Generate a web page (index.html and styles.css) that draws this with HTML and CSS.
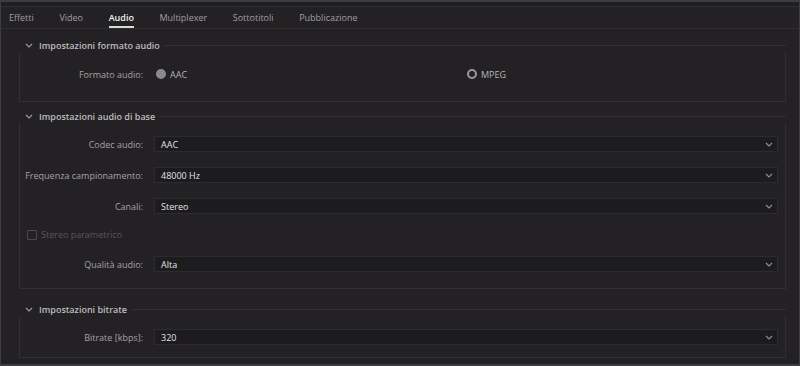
FILE: index.html
```html
<!DOCTYPE html>
<html lang="it">

<head>
    <meta charset="UTF-8">
    <meta name="viewport" content="width=device-width, initial-scale=1.0">
    <title>Impostazioni audio</title>
    <link rel="stylesheet" href="styles.css">
</head>

<body>
    <div class="app">
        <div class="topbar"></div>
        <div class="tabs">
            <span class="tab">Effetti</span>
            <span class="tab">Video</span>
            <span class="tab active">Audio</span>
            <span class="tab">Multiplexer</span>
            <span class="tab">Sottotitoli</span>
            <span class="tab">Pubblicazione</span>
        </div>

        <div class="content">
            <!-- formato -->
            <div class="section first">
                <div class="section-head">
                    <svg class="twisty" width="8" height="5" viewBox="0 0 8 5"><path d="M1 1l3 3 3-3" /></svg>
                    <span class="section-title">Impostazioni formato audio</span>
                    <span class="rule"></span>
                </div>
                <div class="section-body format">
                    <div class="row">
                        <label class="label">Formato audio:</label>
                        <div class="options">
                            <div class="option"><span class="radio checked"></span>AAC</div>
                            <div class="option"><span class="radio"></span>MPEG</div>
                        </div>
                    </div>
                </div>
            </div>

            <!-- base -->
            <div class="section second">
                <div class="section-head">
                    <svg class="twisty" width="8" height="5" viewBox="0 0 8 5"><path d="M1 1l3 3 3-3" /></svg>
                    <span class="section-title">Impostazioni audio di base</span>
                    <span class="rule"></span>
                </div>
                <div class="section-body basic">
                    <div class="row">
                        <label class="label">Codec audio:</label>
                        <div class="select">AAC<svg class="caret" width="8" height="5" viewBox="0 0 8 5"><path d="M1 1l3 3 3-3" /></svg></div>
                    </div>
                    <div class="row">
                        <label class="label">Frequenza campionamento:</label>
                        <div class="select">48000 Hz<svg class="caret" width="8" height="5" viewBox="0 0 8 5"><path d="M1 1l3 3 3-3" /></svg></div>
                    </div>
                    <div class="row">
                        <label class="label">Canali:</label>
                        <div class="select">Stereo<svg class="caret" width="8" height="5" viewBox="0 0 8 5"><path d="M1 1l3 3 3-3" /></svg></div>
                    </div>
                    <div class="check-row">
                        <span class="checkbox"></span>Stereo parametrico
                    </div>
                    <div class="row">
                        <label class="label">Qualità audio:</label>
                        <div class="select">Alta<svg class="caret" width="8" height="5" viewBox="0 0 8 5"><path d="M1 1l3 3 3-3" /></svg></div>
                    </div>
                </div>
            </div>

            <!-- bitrate -->
            <div class="section third">
                <div class="section-head">
                    <svg class="twisty" width="8" height="5" viewBox="0 0 8 5"><path d="M1 1l3 3 3-3" /></svg>
                    <span class="section-title">Impostazioni bitrate</span>
                    <span class="rule"></span>
                </div>
                <div class="section-body bitrate">
                    <div class="row">
                        <label class="label">Bitrate [kbps]:</label>
                        <div class="select">320<svg class="caret" width="8" height="5" viewBox="0 0 8 5"><path d="M1 1l3 3 3-3" /></svg></div>
                    </div>
                </div>
            </div>
        </div>
    </div>
</body>

</html>
```

FILE: styles.css
```css
body {
    margin: 0;
    padding: 0;
    background-color: #232124;
    font-family: 'Open Sans', 'Noto Sans', sans-serif;
    font-size: 9px;
    color: #a3a2a5;
}

.app {
    width: 800px;
    height: 366px;
    box-sizing: border-box;
    border: 1px solid #3d3c3f;
    border-top-width: 2px;
    border-bottom-width: 2px;
    overflow: hidden;
    background: #232124;
}

.topbar {
    height: 4px;
    background: #1f1e21;
    border-bottom: 1px solid #2f2e31;
}

/* tabs */
.tabs {
    display: flex;
    gap: 25.6px;
    height: 21px;
    padding-left: 8px;
    border-bottom: 1px solid #2f2e31;
}

.tab {
    display: flex;
    align-items: center;
    padding-top: 2px;
    box-sizing: border-box;
    color: #a09fa2;
    border-bottom: 2px solid transparent;
}

.tab.active {
    color: #f0f0f0;
    font-weight: 600;
    border-bottom-color: #d8d8d8;
}

.content {
    padding-top: 9px;
}

/* sections */
.section {
    margin: 0 13px 0 18px;
}

.section.second {
    margin-top: 7px;
}

.section.third {
    margin-top: 13px;
}

.section-head {
    display: flex;
    align-items: center;
    height: 14px;
}

.twisty {
    margin-left: 6px;
    fill: none;
    stroke: #9a999c;
    stroke-width: 1.2;
}

.section-title {
    margin: 0 4px 0 6px;
    font-weight: 600;
    color: #bdbcbf;
}

.rule {
    flex: 1;
    height: 1px;
    background: #302f32;
}

.section-body {
    border: 1px solid #302f32;
    border-top: none;
}

.section-body.format {
    padding: 14px 0 19px;
}

.section-body.basic {
    padding: 13px 0 16px;
}

.section-body.bitrate {
    padding: 13px 0 12px;
}

/* rows */
.row {
    display: flex;
    align-items: center;
    height: 16px;
    margin-right: 7px;
}

.basic .row + .row {
    margin-top: 15px;
}

.label {
    width: 123px;
    margin-right: 11px;
    text-align: right;
    color: #a3a2a5;
}

.select {
    flex: 1;
    display: flex;
    align-items: center;
    justify-content: space-between;
    height: 16px;
    box-sizing: border-box;
    padding: 0 4px 0 6px;
    background: #1c1b1d;
    border: 1px solid #2c2b2e;
    color: #e4e4e4;
}

.caret {
    fill: none;
    stroke: #8e8d90;
    stroke-width: 1.2;
}

.options {
    display: flex;
    flex: 1;
    margin-left: 2px;
}

.option {
    flex: 1;
    display: flex;
    align-items: center;
    color: #b5b4b7;
}

.radio {
    width: 10px;
    height: 10px;
    box-sizing: border-box;
    margin-right: 4px;
    border-radius: 50%;
    border: 2px solid #9a999c;
}

.radio.checked {
    background: #8a898c;
    border-color: #8a898c;
}

.check-row {
    display: flex;
    align-items: center;
    height: 11px;
    margin: 15px 0 16px 7px;
    color: #58575a;
}

.checkbox {
    width: 10px;
    height: 10px;
    box-sizing: border-box;
    margin-right: 4px;
    border: 1px solid #4a494c;
    border-radius: 1px;
}
```
